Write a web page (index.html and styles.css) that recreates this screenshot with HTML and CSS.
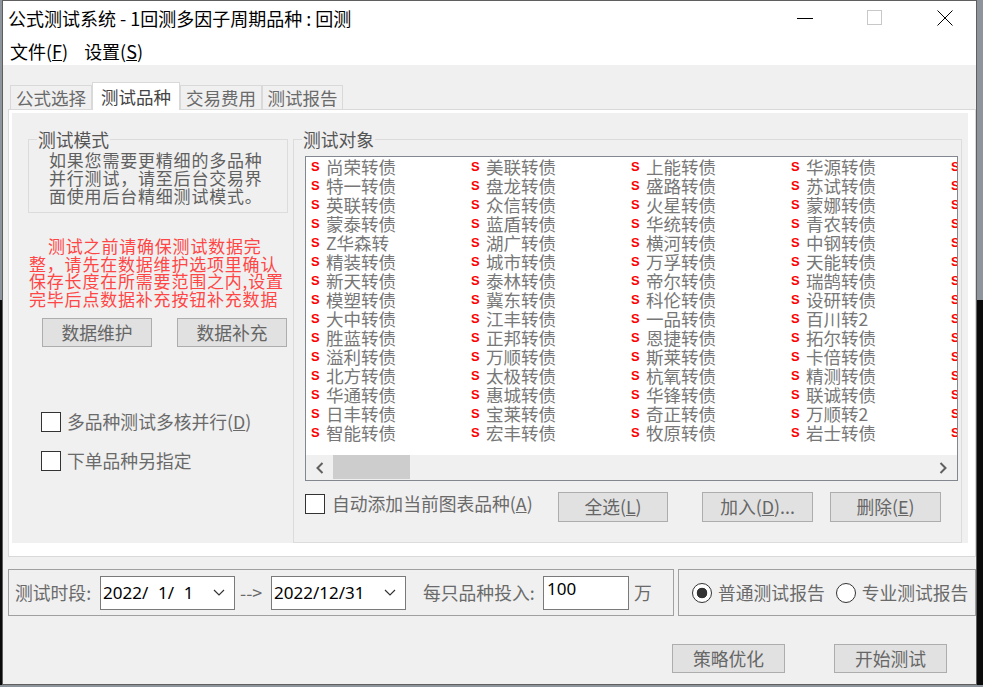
FILE: index.html
```html
<!DOCTYPE html>
<html lang="zh-CN">
<head>
  <meta charset="UTF-8" />
  <title>公式测试系统</title>
  <link rel="stylesheet" href="styles.css">
</head>
<body>
  <div class="window">
    <div class="titlebar">
      <span class="title">公式测试系统 - 1回测多因子周期品种 : 回测</span>
      <div class="controls">
        <span class="ctl"><svg width="16" height="16" viewBox="0 0 16 16"><line x1="0" y1="8.5" x2="16" y2="8.5" stroke="#000" stroke-width="1"/></svg></span>
        <span class="ctl"><svg width="16" height="16" viewBox="0 0 16 16"><rect x="0.5" y="0.5" width="14" height="14" fill="none" stroke="#c8c8c8"/></svg></span>
        <span class="ctl"><svg width="16" height="16" viewBox="0 0 16 16"><path d="M0.5 0.5L15.5 15.5M15.5 0.5L0.5 15.5" stroke="#000" stroke-width="1"/></svg></span>
      </div>
    </div>
    <div class="menubar">
      <span>文件(<u>F</u>)</span>
      <span>设置(<u>S</u>)</span>
    </div>

    <div class="tabs">
      <div class="tab">公式选择</div>
      <div class="tab active">测试品种</div>
      <div class="tab">交易费用</div>
      <div class="tab">测试报告</div>
    </div>

    <div class="panel">
      <div class="page">
        <div class="left">
          <fieldset class="mode">
            <legend>测试模式</legend>
            <p>如果您需要更精细的多品种<br>并行测试，请至后台交易界<br>面使用后台精细测试模式。</p>
          </fieldset>

          <p class="warn">测试之前请确保测试数据完<br>整，请先在数据维护选项里确认<br>保存长度在所需要范围之内,设置<br>完毕后点数据补充按钮补充数据</p>

          <div class="btnrow">
            <div class="btn"><span>数据维护</span></div>
            <div class="btn"><span>数据补充</span></div>
          </div>

          <div class="cbrow first"><span class="cb"></span><span>多品种测试多核并行(<u>D</u>)</span></div>
          <div class="cbrow second"><span class="cb"></span><span>下单品种另指定</span></div>
        </div>

        <fieldset class="target">
          <legend>测试对象</legend>
          <div class="list">
            <div class="items">
              <div class="it"><b>S</b>尚荣转债</div>
              <div class="it"><b>S</b>特一转债</div>
              <div class="it"><b>S</b>英联转债</div>
              <div class="it"><b>S</b>蒙泰转债</div>
              <div class="it"><b>S</b>Z华森转</div>
              <div class="it"><b>S</b>精装转债</div>
              <div class="it"><b>S</b>新天转债</div>
              <div class="it"><b>S</b>模塑转债</div>
              <div class="it"><b>S</b>大中转债</div>
              <div class="it"><b>S</b>胜蓝转债</div>
              <div class="it"><b>S</b>溢利转债</div>
              <div class="it"><b>S</b>北方转债</div>
              <div class="it"><b>S</b>华通转债</div>
              <div class="it"><b>S</b>日丰转债</div>
              <div class="it"><b>S</b>智能转债</div>

              <div class="it"><b>S</b>美联转债</div>
              <div class="it"><b>S</b>盘龙转债</div>
              <div class="it"><b>S</b>众信转债</div>
              <div class="it"><b>S</b>蓝盾转债</div>
              <div class="it"><b>S</b>湖广转债</div>
              <div class="it"><b>S</b>城市转债</div>
              <div class="it"><b>S</b>泰林转债</div>
              <div class="it"><b>S</b>冀东转债</div>
              <div class="it"><b>S</b>江丰转债</div>
              <div class="it"><b>S</b>正邦转债</div>
              <div class="it"><b>S</b>万顺转债</div>
              <div class="it"><b>S</b>太极转债</div>
              <div class="it"><b>S</b>惠城转债</div>
              <div class="it"><b>S</b>宝莱转债</div>
              <div class="it"><b>S</b>宏丰转债</div>

              <div class="it"><b>S</b>上能转债</div>
              <div class="it"><b>S</b>盛路转债</div>
              <div class="it"><b>S</b>火星转债</div>
              <div class="it"><b>S</b>华统转债</div>
              <div class="it"><b>S</b>横河转债</div>
              <div class="it"><b>S</b>万孚转债</div>
              <div class="it"><b>S</b>帝尔转债</div>
              <div class="it"><b>S</b>科伦转债</div>
              <div class="it"><b>S</b>一品转债</div>
              <div class="it"><b>S</b>恩捷转债</div>
              <div class="it"><b>S</b>斯莱转债</div>
              <div class="it"><b>S</b>杭氧转债</div>
              <div class="it"><b>S</b>华锋转债</div>
              <div class="it"><b>S</b>奇正转债</div>
              <div class="it"><b>S</b>牧原转债</div>

              <div class="it"><b>S</b>华源转债</div>
              <div class="it"><b>S</b>苏试转债</div>
              <div class="it"><b>S</b>蒙娜转债</div>
              <div class="it"><b>S</b>青农转债</div>
              <div class="it"><b>S</b>中钢转债</div>
              <div class="it"><b>S</b>天能转债</div>
              <div class="it"><b>S</b>瑞鹄转债</div>
              <div class="it"><b>S</b>设研转债</div>
              <div class="it"><b>S</b>百川转2</div>
              <div class="it"><b>S</b>拓尔转债</div>
              <div class="it"><b>S</b>卡倍转债</div>
              <div class="it"><b>S</b>精测转债</div>
              <div class="it"><b>S</b>联诚转债</div>
              <div class="it"><b>S</b>万顺转2</div>
              <div class="it"><b>S</b>岩士转债</div>

              <div class="it"><b>S</b></div>
              <div class="it"><b>S</b></div>
              <div class="it"><b>S</b></div>
              <div class="it"><b>S</b></div>
              <div class="it"><b>S</b></div>
              <div class="it"><b>S</b></div>
              <div class="it"><b>S</b></div>
              <div class="it"><b>S</b></div>
              <div class="it"><b>S</b></div>
              <div class="it"><b>S</b></div>
              <div class="it"><b>S</b></div>
              <div class="it"><b>S</b></div>
              <div class="it"><b>S</b></div>
              <div class="it"><b>S</b></div>
              <div class="it"><b>S</b></div>
            </div>
            <div class="hscroll">
              <span class="arrow"><svg width="8" height="12" viewBox="0 0 8 12"><path d="M6.5 1L1.5 6L6.5 11" fill="none" stroke="#606060" stroke-width="2"/></svg></span>
              <span class="thumb"></span>
              <span class="track"></span>
              <span class="arrow r"><svg width="8" height="12" viewBox="0 0 8 12"><path d="M1.5 1L6.5 6L1.5 11" fill="none" stroke="#606060" stroke-width="2"/></svg></span>
            </div>
          </div>

          <div class="tools">
            <div class="cbrow"><span class="cb"></span><span>自动添加当前图表品种(<u>A</u>)</span></div>
            <div class="btn sel"><span>全选(<u>L</u>)</span></div>
            <div class="btn add"><span>加入(<u>D</u>)...</span></div>
            <div class="btn del"><span>删除(<u>E</u>)</span></div>
          </div>
        </fieldset>
      </div>
    </div>

    <div class="bottom">
      <div class="row">
        <div class="grp period">
          <span class="lbl">测试时段:</span>
          <div class="picker"><span>2022/&#8199;1/&#8199;1</span><svg width="12" height="7" viewBox="0 0 12 7"><path d="M1 1L6 6L11 1" fill="none" stroke="#333" stroke-width="1.2"/></svg></div>
          <span class="dash">--&gt;</span>
          <div class="picker"><span>2022/12/31</span><svg width="12" height="7" viewBox="0 0 12 7"><path d="M1 1L6 6L11 1" fill="none" stroke="#333" stroke-width="1.2"/></svg></div>
          <span class="lbl2">每只品种投入:</span>
          <div class="num">100</div>
          <span class="unit">万</span>
        </div>
        <div class="grp report">
          <span class="radio on"></span><span class="rlbl">普通测试报告</span>
          <span class="radio"></span><span class="rlbl">专业测试报告</span>
        </div>
      </div>
      <div class="actions">
        <div class="btn big first"><span>策略优化</span></div>
        <div class="btn big"><span>开始测试</span></div>
      </div>
    </div>
  </div>
</body>
</html>
```

FILE: styles.css
```css
* {
  box-sizing: border-box;
}

body {
  margin: 0;
  background: linear-gradient(#8d949b 0 300px, #0b0b0b 300px);
  font-family: "Noto Sans CJK SC", "Noto Sans", sans-serif;
  text-autospace: no-autospace;
}

.window {
  margin-left: 2px;
  width: 975px;
  height: 685px;
  border: 1px solid #5f5f5f;
  background: #f0f0f0;
  overflow: hidden;
}

/* title + menu */
.titlebar {
  height: 34px;
  background: #fff;
  display: flex;
  align-items: center;
  padding-left: 5px;
}

.title {
  font-size: 18px;
  line-height: 1;
  color: #000;
}

.controls {
  margin-left: auto;
  margin-right: -4px;
  display: flex;
}

.ctl {
  width: 70px;
  height: 34px;
  display: flex;
  align-items: center;
  justify-content: center;
}

.menubar {
  height: 30px;
  background: #fff;
  display: flex;
  align-items: center;
  gap: 16px;
  padding: 2px 0 0 7px;
  font-size: 18px;
  line-height: 1;
  color: #000;
}

/* tabs */
.tabs {
  display: flex;
  align-items: flex-end;
  height: 27px;
  margin: 17px 0 0 7px;
}

.tab {
  height: 24px;
  border: 1px solid #d9d9d9;
  border-bottom: 0;
  font-size: 17.5px;
  line-height: 1;
  color: #6a6a6a;
  display: flex;
  align-items: center;
  justify-content: center;
  width: 82px;
}

.tab.active {
  width: 88px;
  height: 28px;
  margin-bottom: -1px;
  background: #fff;
  color: #444;
  position: relative;
  z-index: 1;
}

.tab:last-child {
  width: 81px;
}

.panel {
  margin-left: 5px;
  height: 448px;
  border: 1px solid #d9d9d9;
  background: #fff;
  padding: 3px 7px 12px 3px;
}

.page {
  height: 430px;
  background: #f0f0f0;
  display: flex;
  padding: 17px 0 0 16px;
}

.left {
  width: 265px;
  flex: none;
}

fieldset {
  margin: 0;
  border: 1px solid #dcdcdc;
  min-width: 0;
}

legend {
  margin-left: 8px;
  padding: 0 1px;
  font-size: 17.8px;
  line-height: 18px;
  color: #555;
}

.mode {
  width: 260px;
  padding: 0 0 7px 0;
}

.mode p {
  margin: 3px 0 0 20px;
  font-size: 17px;
  letter-spacing: 0.8px;
  line-height: 18px;
  color: #606060;
  white-space: nowrap;
}

.warn {
  margin: 24px 0 0 1px;
  color: #ff4646;
  font-size: 17px;
  letter-spacing: 0.8px;
  line-height: 17.5px;
  text-indent: 19px;
  white-space: nowrap;
}

.btnrow {
  margin-top: 11px;
  display: flex;
  gap: 25px;
  padding-left: 14px;
}

.btn {
  width: 110px;
  height: 29px;
  border: 1px solid #adadad;
  background: #e1e1e1;
  font-size: 17.8px;
  line-height: 1;
  color: #666;
  display: flex;
  align-items: center;
  justify-content: center;
  white-space: nowrap;
  flex: none;
}

.cbrow {
  display: flex;
  align-items: center;
  gap: 6px;
  height: 20px;
  font-size: 17.8px;
  line-height: 1;
  color: #6a6a6a;
  white-space: nowrap;
}

.cbrow.first {
  margin: 65px 0 0 13px;
}

.cbrow.second {
  margin: 19px 0 0 13px;
}

.cb {
  width: 20px;
  height: 20px;
  border: 1px solid #333;
  background: #fff;
  flex: none;
}

/* right group */
.target {
  width: 669px;
  padding: 0 0 2px 0;
  flex: none;
}

.list {
  margin: 8px 0 0 11px;
  width: 653px;
  height: 325px;
  border: 1px solid #828790;
  background: #fff;
  display: flex;
  flex-direction: column;
}

.items {
  height: 301px;
  margin-top: -3px;
  padding: 3px 0 0 5px;
  overflow-x: clip;
  display: grid;
  grid-template-rows: repeat(15, 19px);
  grid-auto-flow: column;
  grid-auto-columns: 160px;
  align-content: start;
}

.it {
  display: flex;
  align-items: center;
  white-space: nowrap;
  font-size: 17.5px;
  line-height: 19px;
  color: #777;
}

.it b {
  width: 15px;
  flex: none;
  color: #f00;
  font: bold 13px "Liberation Sans", sans-serif;
}

.hscroll {
  height: 25px;
  background: #f0f0f0;
  display: flex;
}

.arrow {
  width: 27px;
  display: flex;
  align-items: center;
  justify-content: center;
}

.arrow.r {
  width: 29px;
}

.thumb {
  width: 77px;
  background: #cdcdcd;
  margin: 0 0 1px;
}

.track {
  flex: 1;
}

.tools {
  display: flex;
  align-items: flex-start;
  height: 30px;
  margin: 11px 0 0 11px;
  padding-right: 20px;
}

.tools .cbrow {
  margin-top: 2px;
  gap: 7px;
}

.tools .btn {
  height: 30px;
}

.btn.sel {
  margin-left: auto;
}

.btn.add {
  margin-left: 34px;
  width: 111px;
}

.btn.del {
  margin-left: 17px;
  width: 111px;
}

/* bottom area */
.bottom {
  padding: 12px 0 0 5px;
}

.row {
  display: flex;
}

.grp {
  height: 47px;
  border: 1px solid #a0a0a0;
  display: flex;
  align-items: center;
  font-size: 17.8px;
  line-height: 1;
  color: #6a6a6a;
  white-space: nowrap;
}

.period {
  width: 666px;
  padding-left: 6px;
}

.lbl {
  width: 85px;
  flex: none;
}

.picker {
  width: 135px;
  height: 34px;
  flex: none;
  border: 1px solid #7a7a7a;
  background: #fff;
  display: flex;
  align-items: center;
  justify-content: space-between;
  padding: 0 9px 0 2px;
  font: 17px "Noto Sans", sans-serif;
  color: #000;
  white-space: pre;
}

.dash {
  width: 36px;
  flex: none;
  padding-left: 5px;
}

.lbl2 {
  width: 120px;
  flex: none;
  margin-left: 17px;
}

.num {
  width: 86px;
  height: 34px;
  flex: none;
  border: 1px solid #7a7a7a;
  background: #fff;
  padding: 2px 0 0 3px;
  font: 17px/20px "Noto Sans", sans-serif;
  color: #000;
}

.unit {
  margin-left: 5px;
}

.report {
  margin-left: 4px;
  width: 298px;
  padding-left: 13px;
}

.radio {
  width: 20px;
  height: 20px;
  flex: none;
  border: 1px solid #333;
  border-radius: 50%;
  background: #fff;
}

.radio.on {
  background: radial-gradient(circle, #333 0 5px, #fff 5.6px);
}

.rlbl {
  margin-left: 6px;
  margin-right: 11px;
}

.actions {
  display: flex;
  margin-top: 28px;
}

.btn.big {
  width: 113px;
}

.btn.big.first {
  margin-left: 664px;
  margin-right: 49px;
}
```
